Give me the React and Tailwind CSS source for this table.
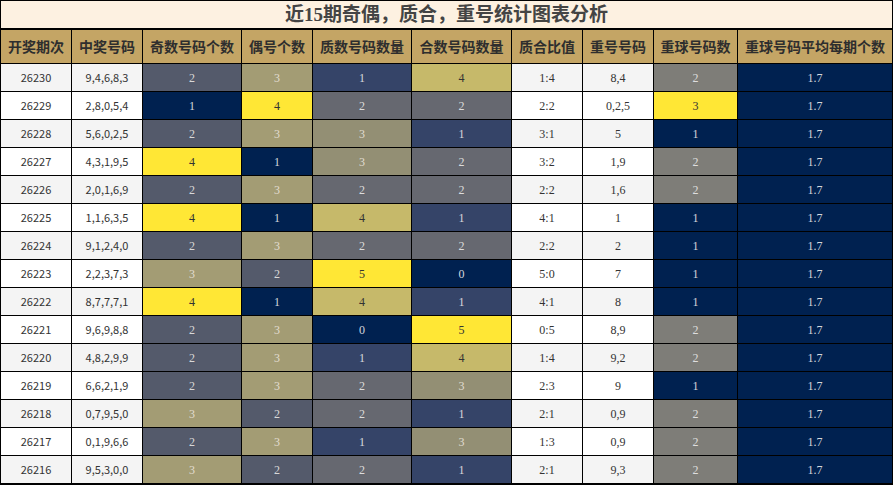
import React from "react";

const rows = [
  ["26230", "9,4,6,8,3", 2, 3, 1, 4, "1:4", "8,4", 2],
  ["26229", "2,8,0,5,4", 1, 4, 2, 2, "2:2", "0,2,5", 3],
  ["26228", "5,6,0,2,5", 2, 3, 3, 1, "3:1", "5", 1],
  ["26227", "4,3,1,9,5", 4, 1, 3, 2, "3:2", "1,9", 2],
  ["26226", "2,0,1,6,9", 2, 3, 2, 2, "2:2", "1,6", 2],
  ["26225", "1,1,6,3,5", 4, 1, 4, 1, "4:1", "1", 1],
  ["26224", "9,1,2,4,0", 2, 3, 2, 2, "2:2", "2", 1],
  ["26223", "2,2,3,7,3", 3, 2, 5, 0, "5:0", "7", 1],
  ["26222", "8,7,7,7,1", 4, 1, 4, 1, "4:1", "8", 1],
  ["26221", "9,6,9,8,8", 2, 3, 0, 5, "0:5", "8,9", 2],
  ["26220", "4,8,2,9,9", 2, 3, 1, 4, "1:4", "9,2", 2],
  ["26219", "6,6,2,1,9", 2, 3, 2, 3, "2:3", "9", 1],
  ["26218", "0,7,9,5,0", 3, 2, 2, 1, "2:1", "0,9", 2],
  ["26217", "0,1,9,6,6", 2, 3, 1, 3, "1:3", "0,9", 2],
  ["26216", "9,5,3,0,0", 3, 2, 2, 1, "2:1", "9,3", 2],
];

const headers = [
  "开奖期次",
  "中奖号码",
  "奇数号码个数",
  "偶号个数",
  "质数号码数量",
  "合数号码数量",
  "质合比值",
  "重号号码",
  "重球号码数",
  "重球号码平均每期个数",
];

const oddEven = {
  1: "bg-[#002150] text-[#d4d6dc]",
  2: "bg-[#545a6b] text-[#d8d8d8]",
  3: "bg-[#a39c74] text-[#e2ddd0]",
  4: "bg-[#ffe735] text-[#333333]",
};

const primeComp = {
  0: "bg-[#002150] text-[#d4d6dc]",
  1: "bg-[#354468] text-[#d8d8dc]",
  2: "bg-[#666870] text-[#dcdcdc]",
  3: "bg-[#938f74] text-[#e0ddd2]",
  4: "bg-[#c6b96a] text-[#333333]",
  5: "bg-[#ffe735] text-[#333333]",
};

const repeat = {
  1: "bg-[#002150] text-[#d4d6dc]",
  2: "bg-[#7e7d78] text-[#dedede]",
  3: "bg-[#ffe735] text-[#333333]",
};

const sans = "font-['Noto_Sans_CJK_SC','Noto_Sans',sans-serif]";
const serif = "font-['Liberation_Serif','Noto_Sans_CJK_SC',serif]";

export default function App() {
  return (
    <div className="w-[893px] h-[485px] bg-black p-px flex flex-col">
      <div
        className={`h-[27px] bg-[#fdf1e1] flex items-center justify-center text-[19px] font-bold text-[#444444] leading-none ${serif}`}
      >
        <span className="font-['Liberation_Serif','Noto_Sans_CJK_SC',serif]">近15期奇偶，质合，重号统计图表分析</span>
      </div>
      <div className="h-[2px]" />
      <div className="grid grid-cols-[70px_70px_98px_70px_98px_99px_70px_70px_83px_154px] gap-px">
        {headers.map((h) => (
          <div
            key={h}
            className={`h-[33px] bg-[#c4a565] flex items-center justify-center text-[14px] font-bold text-[#2e2e2e] whitespace-nowrap ${sans}`}
          >
            {h}
          </div>
        ))}
        {rows.map((r, i) => {
          const base = i % 2 === 0 ? "bg-[#f4f4f4]" : "bg-white";
          const cell = "h-[27px] flex items-center justify-center";
          return (
            <React.Fragment key={r[0]}>
              <div className={`${cell} ${base} text-[11px] text-[#333333] ${sans}`}>{r[0]}</div>
              <div className={`${cell} ${base} text-[11px] text-[#333333] ${sans}`}>{r[1]}</div>
              <div className={`${cell} ${oddEven[r[2]]} text-[12px] ${serif}`}>{r[2]}</div>
              <div className={`${cell} ${oddEven[r[3]]} text-[12px] ${serif}`}>{r[3]}</div>
              <div className={`${cell} ${primeComp[r[4]]} text-[12px] ${serif}`}>{r[4]}</div>
              <div className={`${cell} ${primeComp[r[5]]} text-[12px] ${serif}`}>{r[5]}</div>
              <div className={`${cell} ${base} text-[12px] text-[#333333] ${serif}`}>{r[6]}</div>
              <div className={`${cell} ${base} text-[12px] text-[#333333] ${serif}`}>{r[7]}</div>
              <div className={`${cell} ${repeat[r[8]]} text-[12px] ${serif}`}>{r[8]}</div>
              <div className={`${cell} bg-[#002150] text-[#d4d6dc] text-[12px] ${serif}`}>1.7</div>
            </React.Fragment>
          );
        })}
      </div>
    </div>
  );
}
